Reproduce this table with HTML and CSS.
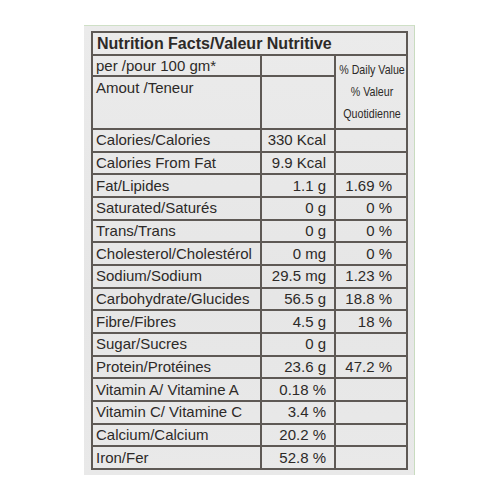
FILE: index.html
```html
<!DOCTYPE html>
<html lang="en">

<head>
    <meta charset="UTF-8">
    <meta name="viewport" content="width=device-width, initial-scale=1.0">
    <title>Nutrition Facts</title>
    <link rel="stylesheet" href="styles.css">
</head>

<body>
    <div class="label">
        <table class="facts">
            <colgroup>
                <col class="col-name">
                <col class="col-amount">
                <col class="col-dv">
            </colgroup>
            <tr class="title-row">
                <th colspan="3">Nutrition Facts/Valeur Nutritive</th>
            </tr>
            <tr class="per-row">
                <td>per /pour 100 gm*</td>
                <td></td>
                <td rowspan="2" class="dv-head"><span>% Daily Value<br>% Valeur<br>Quotidienne</span></td>
            </tr>
            <tr class="amount-row">
                <td>Amout /Teneur</td>
                <td></td>
            </tr>
            <tr><td>Calories/Calories</td><td class="num">330 Kcal</td><td class="num"></td></tr>
            <tr><td>Calories From Fat</td><td class="num">9.9 Kcal</td><td class="num"></td></tr>
            <tr><td>Fat/Lipides</td><td class="num">1.1 g</td><td class="num">1.69 %</td></tr>
            <tr><td>Saturated/Saturés</td><td class="num">0 g</td><td class="num">0 %</td></tr>
            <tr><td>Trans/Trans</td><td class="num">0 g</td><td class="num">0 %</td></tr>
            <tr><td>Cholesterol/Cholestérol</td><td class="num">0 mg</td><td class="num">0 %</td></tr>
            <tr><td>Sodium/Sodium</td><td class="num">29.5 mg</td><td class="num">1.23 %</td></tr>
            <tr><td>Carbohydrate/Glucides</td><td class="num">56.5 g</td><td class="num">18.8 %</td></tr>
            <tr><td>Fibre/Fibres</td><td class="num">4.5 g</td><td class="num">18 %</td></tr>
            <tr><td>Sugar/Sucres</td><td class="num">0 g</td><td class="num"></td></tr>
            <tr><td>Protein/Protéines</td><td class="num">23.6 g</td><td class="num">47.2 %</td></tr>
            <tr><td>Vitamin A/ Vitamine A</td><td class="num">0.18 %</td><td class="num"></td></tr>
            <tr><td>Vitamin C/ Vitamine C</td><td class="num">3.4 %</td><td class="num"></td></tr>
            <tr><td>Calcium/Calcium</td><td class="num">20.2 %</td><td class="num"></td></tr>
            <tr><td>Iron/Fer</td><td class="num">52.8 %</td><td class="num"></td></tr>
        </table>
    </div>
</body>

</html>
```

FILE: styles.css
```css
* {
    margin: 0;
    padding: 0;
    box-sizing: border-box;
}

body {
    font-family: 'Liberation Sans', Arial, sans-serif;
    background: #ffffff;
    width: 500px;
    height: 500px;
    overflow: hidden;
}

.label {
    margin: 25px 0 0 84px;
    width: 331px;
    height: 450px;
    padding: 5px 0 0 7px;
    background: linear-gradient(180deg, #ebebeb 0%, #e6e6e6 60%, #e9e9e9 100%);
    border-top: 1px solid #cfe0c6;
    border-right: 1px solid #c9dcc0;
}

.facts {
    width: 315px;
    table-layout: fixed;
    border-collapse: collapse;
    border: 2px solid #55504c;
    color: #2d2a28;
    font-size: 15px;
}

.col-name {
    width: 169px;
}

.col-amount {
    width: 74px;
}

.col-dv {
    width: 72px;
}

.facts th,
.facts td {
    border: 2px solid #5e5955;
    height: 22.67px;
    line-height: 18px;
    padding: 0 0 0 3px;
    white-space: nowrap;
}

.title-row th {
    height: 23px;
    text-align: left;
    font-size: 16px;
    font-weight: bold;
    padding-left: 4px;
}

.per-row td {
    height: 21px;
}

.amount-row td {
    height: 53px;
    vertical-align: top;
    padding-top: 2px;
}

.dv-head {
    font-size: 13px;
    line-height: 22px !important;
    padding: 0 !important;
}

.dv-head span {
    display: block;
    width: 88px;
    margin-left: -8px;
    text-align: center;
    transform: scaleX(0.82);
}

.facts td.num {
    text-align: right;
    padding: 0 8px 0 0;
}

.facts td.num:last-child {
    padding-right: 14px;
}
```
